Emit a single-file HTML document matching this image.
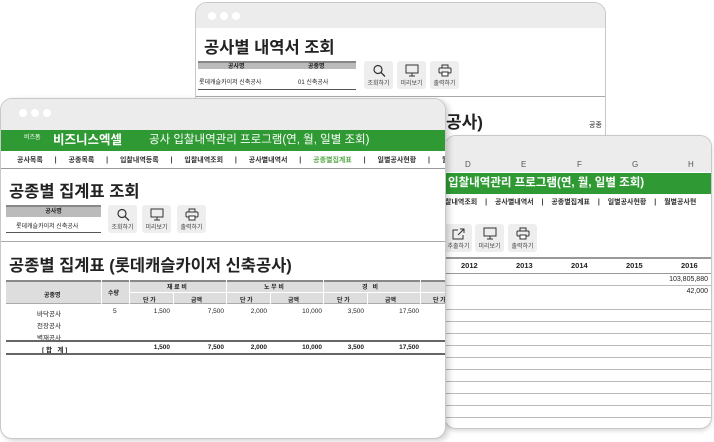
<!DOCTYPE html>
<html><head><meta charset="utf-8"><style>
*{margin:0;padding:0;box-sizing:border-box}
body{width:714px;height:442px;background:#fff;position:relative;overflow:hidden;font-family:"Liberation Sans","Noto Sans CJK KR",sans-serif;color:#222}
.win{position:absolute;background:#fff;border:1px solid #c8c8c8;border-radius:12px;overflow:hidden}
.bar{background:#ececec;position:absolute;left:0;right:0;top:0}
.dots{position:absolute;left:18px;display:flex;gap:4px}
.dots i{width:8px;height:8px;border-radius:50%;background:#fff;display:block}
.abs{position:absolute;white-space:nowrap}
.green{position:absolute;left:0;right:0;background:#2f9a33;color:#fff;font-weight:bold}
.btn{position:absolute;width:29px;height:28px;background:#eee;border-radius:3px;font-size:6px;text-align:center;color:#444}
.btn svg{display:block;margin:3px auto 1px}
.nav{position:absolute;font-size:7px;font-weight:bold;color:#333;white-space:nowrap;word-spacing:4px}
.t{font-size:7px}
</style></head><body>

<!-- back window A -->
<div class="win" style="left:195px;top:2px;width:411px;height:200px">
 <div class="bar" style="height:25px"><div class="dots" style="top:9px;left:12px"><i></i><i></i><i></i></div></div>
 <div class="abs" style="left:8px;top:31px;font-size:16.5px;font-weight:bold">공사별 내역서 조회</div>
 <div class="abs" style="left:2px;top:58px;width:158px;height:8px;background:#bbb;border-top:2px solid #888"></div>
 <div class="abs t" style="left:32px;top:58px;font-size:6px;font-weight:bold">공사명</div>
 <div class="abs t" style="left:112px;top:58px;font-size:6px;font-weight:bold">공종명</div>
 <div class="abs t" style="left:3px;top:74px;font-size:6px">롯데캐슬카이저 신축공사</div>
 <div class="abs t" style="left:102px;top:74px;font-size:6px">01 신축공사</div>
 <div class="abs" style="left:2px;top:86px;width:158px;border-top:1px solid #555"></div>
 <div class="btn" style="left:168px;top:58px"><svg width="14" height="13" viewBox="0 0 14 13"><circle cx="6" cy="5.5" r="4" fill="none" stroke="#333" stroke-width="1.2"/><path d="M9 8.5l4 4" stroke="#333" stroke-width="1.3"/></svg>조회하기</div>
 <div class="btn" style="left:201px;top:58px"><svg width="14" height="13" viewBox="0 0 14 13"><rect x="1" y="1" width="12" height="8" fill="none" stroke="#333"/><path d="M7 9v3M4 12h6" stroke="#333"/></svg>미리보기</div>
 <div class="btn" style="left:234px;top:58px"><svg width="14" height="13" viewBox="0 0 14 13"><rect x="4" y="1" width="6" height="3" fill="none" stroke="#333"/><rect x="1" y="4" width="12" height="5" rx="1" fill="none" stroke="#333"/><rect x="4" y="8" width="6" height="4" fill="#fff" stroke="#333"/></svg>출력하기</div>
 <div class="abs" style="left:0;top:93px;width:411px;border-top:1px solid #aaa"></div>
 <div class="abs" style="left:250px;top:105px;font-size:17px;font-weight:bold">공사)</div>
 <div class="abs" style="left:393px;top:117px;font-size:7px">공종</div>
</div>

<!-- right window C -->
<div class="win" style="left:444px;top:135px;width:268px;height:294px;box-shadow:0 2px 4px rgba(0,0,0,.15)">
 <div class="bar" style="height:36px"></div>
 <div class="abs" style="left:0;top:24px;width:268px;height:12px;font-size:8px;color:#555">
  <span class="abs" style="left:20px">D</span><span class="abs" style="left:76px">E</span><span class="abs" style="left:132px">F</span><span class="abs" style="left:187px">G</span><span class="abs" style="left:243px">H</span>
 </div>
 <div class="green" style="top:37px;height:21px;font-size:11.5px;line-height:21px;padding-left:3px">입찰내역관리 프로그램(연, 월, 일별 조회)</div>
 <div class="nav" style="left:0;top:61px;word-spacing:2px">찰내역조회 &nbsp;| &nbsp;공사별내역서 &nbsp;| &nbsp;공종별집계표 &nbsp;| &nbsp;일별공사현황 &nbsp;| &nbsp;월별공사현</div>
 <div class="btn" style="left:0;top:88px;width:27px"><svg width="14" height="13" viewBox="0 0 14 13"><path d="M6 3H1v9h10V8M6 8l6-6M8 2h4v4" fill="none" stroke="#333"/></svg>추출하기</div>
 <div class="btn" style="left:30px;top:88px"><svg width="14" height="13" viewBox="0 0 14 13"><rect x="1" y="1" width="12" height="8" fill="none" stroke="#333"/><path d="M7 9v3M4 12h6" stroke="#333"/></svg>미리보기</div>
 <div class="btn" style="left:63px;top:88px"><svg width="14" height="13" viewBox="0 0 14 13"><rect x="4" y="1" width="6" height="3" fill="none" stroke="#333"/><rect x="1" y="4" width="12" height="5" rx="1" fill="none" stroke="#333"/><rect x="4" y="8" width="6" height="4" fill="#fff" stroke="#333"/></svg>출력하기</div>
 <div class="abs" style="left:0;top:121px;width:268px;border-top:2px solid #999"></div>
 <div class="abs" style="left:0;top:125px;width:268px;font-size:7.5px;font-weight:bold">
  <span class="abs" style="left:16px">2012</span><span class="abs" style="left:71px">2013</span><span class="abs" style="left:126px">2014</span><span class="abs" style="left:181px">2015</span><span class="abs" style="left:236px">2016</span>
 </div>
 <div class="abs" style="left:0;top:137px;width:268px;border-top:1px solid #999"></div>
 <div class="abs" style="right:3px;top:140px;font-size:7px">103,805,880</div>
 <div class="abs" style="left:0;top:149px;width:268px;border-top:1px solid #bbb"></div>
 <div class="abs" style="right:3px;top:152px;font-size:7px">42,000</div>
 <div class="abs" style="left:0;top:162px;width:268px;height:130px;background:repeating-linear-gradient(#fff 0,#fff 11px,#bbb 11px,#bbb 12px)"></div>
</div>

<!-- front window B -->
<div class="win" style="left:0;top:98px;width:446px;height:341px;box-shadow:3px 2px 6px rgba(0,0,0,.18)">
 <div class="bar" style="height:31px"><div class="dots" style="top:10px"><i></i><i></i><i></i></div></div>
 <div class="green" style="top:31px;height:21px;line-height:21px">
  <span class="abs" style="left:23px;font-size:6px;font-weight:normal;top:-2px">비즈폼</span>
  <span class="abs" style="left:52px;font-size:12.5px">비즈니스엑셀</span>
  <span class="abs" style="left:148px;font-size:11.5px;font-weight:normal;">공사 입찰내역관리 프로그램(연, 월, 일별 조회)</span>
 </div>
 <div class="nav" style="left:16px;top:56px">공사목록 &nbsp;| &nbsp;공종목록 &nbsp;| &nbsp;입찰내역등록 &nbsp;| &nbsp;입찰내역조회 &nbsp;| &nbsp;공사별내역서 &nbsp;| &nbsp;<span style="color:#5aaa4a">공종별집계표</span> &nbsp;| &nbsp;일별공사현황 &nbsp;| &nbsp;월별공사현</div>
 <div class="abs" style="left:0;top:69px;width:446px;border-top:1px solid #999"></div>
 <div class="abs" style="left:8px;top:79px;font-size:16.5px;font-weight:bold">공종별 집계표 조회</div>
 <div class="abs" style="left:5px;top:106px;width:95px;height:12px;background:#bbb;border-top:2px solid #888;font-size:6px;font-weight:bold;text-align:center;line-height:10px">공사명</div>
 <div class="abs" style="left:15px;top:122px;font-size:6px">롯데캐슬카이저 신축공사</div>
 <div class="abs" style="left:5px;top:133px;width:95px;border-top:1px solid #555"></div>
 <div class="btn" style="left:107px;top:106px"><svg width="14" height="13" viewBox="0 0 14 13"><circle cx="6" cy="5.5" r="4" fill="none" stroke="#333" stroke-width="1.2"/><path d="M9 8.5l4 4" stroke="#333" stroke-width="1.3"/></svg>조회하기</div>
 <div class="btn" style="left:141px;top:106px"><svg width="14" height="13" viewBox="0 0 14 13"><rect x="1" y="1" width="12" height="8" fill="none" stroke="#333"/><path d="M7 9v3M4 12h6" stroke="#333"/></svg>미리보기</div>
 <div class="btn" style="left:176px;top:106px"><svg width="14" height="13" viewBox="0 0 14 13"><rect x="4" y="1" width="6" height="3" fill="none" stroke="#333"/><rect x="1" y="4" width="12" height="5" rx="1" fill="none" stroke="#333"/><rect x="4" y="8" width="6" height="4" fill="#fff" stroke="#333"/></svg>출력하기</div>
 <div class="abs" style="left:0;top:142px;width:446px;border-top:1px solid #aaa"></div>
 <div class="abs" style="left:8px;top:153px;font-size:16.5px;font-weight:bold">공종별 집계표 (롯데캐슬카이저 신축공사)</div>
 <!-- table -->
 <div class="abs" style="left:5px;top:181px;width:441px;height:24px;background:#ddd;border-top:2px solid #888;border-bottom:1px solid #aaa"></div>
 <div class="abs" style="left:100px;top:181px;height:24px;border-left:1px solid #fff"></div>
 <div class="abs" style="left:128px;top:181px;height:24px;border-left:1px solid #fff"></div>
 <div class="abs" style="left:225px;top:181px;height:24px;border-left:1px solid #fff"></div>
 <div class="abs" style="left:322px;top:181px;height:24px;border-left:1px solid #fff"></div>
 <div class="abs" style="left:419px;top:181px;height:24px;border-left:1px solid #fff"></div>
 <div class="abs" style="left:128px;top:193px;width:318px;border-top:1px solid #fff"></div>
 <div class="abs" style="left:172px;top:193px;height:12px;border-left:1px solid #fff"></div>
 <div class="abs" style="left:269px;top:193px;height:12px;border-left:1px solid #fff"></div>
 <div class="abs" style="left:366px;top:193px;height:12px;border-left:1px solid #fff"></div>
 <div class="abs" style="font-size:6px;font-weight:bold;left:0;top:0;width:446px">
  <span class="abs" style="left:43px;top:191px">공종명</span>
  <span class="abs" style="left:107px;top:189px">수량</span>
  <span class="abs" style="left:166px;top:183px">재 료 비</span>
  <span class="abs" style="left:263px;top:183px">노 무 비</span>
  <span class="abs" style="left:361px;top:183px">경 &nbsp;&nbsp;비</span>
  <span class="abs" style="left:142px;top:196px">단 가</span><span class="abs" style="left:190px;top:196px">금액</span>
  <span class="abs" style="left:239px;top:196px">단 가</span><span class="abs" style="left:287px;top:196px">금액</span>
  <span class="abs" style="left:336px;top:196px">단 가</span><span class="abs" style="left:384px;top:196px">금액</span>
  <span class="abs" style="left:432px;top:196px">단 가</span>
 </div>
 <div class="abs" style="font-size:6.5px;left:0;top:0;width:446px">
  <span class="abs" style="left:36px;top:209px">바닥공사</span>
  <span class="abs" style="left:112px;top:209px">5</span>
  <span class="abs" style="right:277px;top:209px">1,500</span><span class="abs" style="right:223px;top:209px">7,500</span>
  <span class="abs" style="right:180px;top:209px">2,000</span><span class="abs" style="right:125px;top:209px">10,000</span>
  <span class="abs" style="right:83px;top:209px">3,500</span><span class="abs" style="right:28px;top:209px">17,500</span>
  <span class="abs" style="left:36px;top:221px">천장공사</span>
  <span class="abs" style="left:36px;top:233px">벽재공사</span>
 </div>
 <div class="abs" style="left:5px;top:241px;width:441px;border-top:2px solid #666"></div>
 <div class="abs" style="font-size:6.5px;font-weight:bold;left:0;top:0;width:446px">
  <span class="abs" style="left:41px;top:245px">[ 합 &nbsp;&nbsp;계 ]</span>
  <span class="abs" style="right:277px;top:245px">1,500</span><span class="abs" style="right:223px;top:245px">7,500</span>
  <span class="abs" style="right:180px;top:245px">2,000</span><span class="abs" style="right:125px;top:245px">10,000</span>
  <span class="abs" style="right:83px;top:245px">3,500</span><span class="abs" style="right:28px;top:245px">17,500</span>
 </div>
 <div class="abs" style="left:5px;top:254px;width:441px;border-top:2px solid #666"></div>
</div>
</body></html>
